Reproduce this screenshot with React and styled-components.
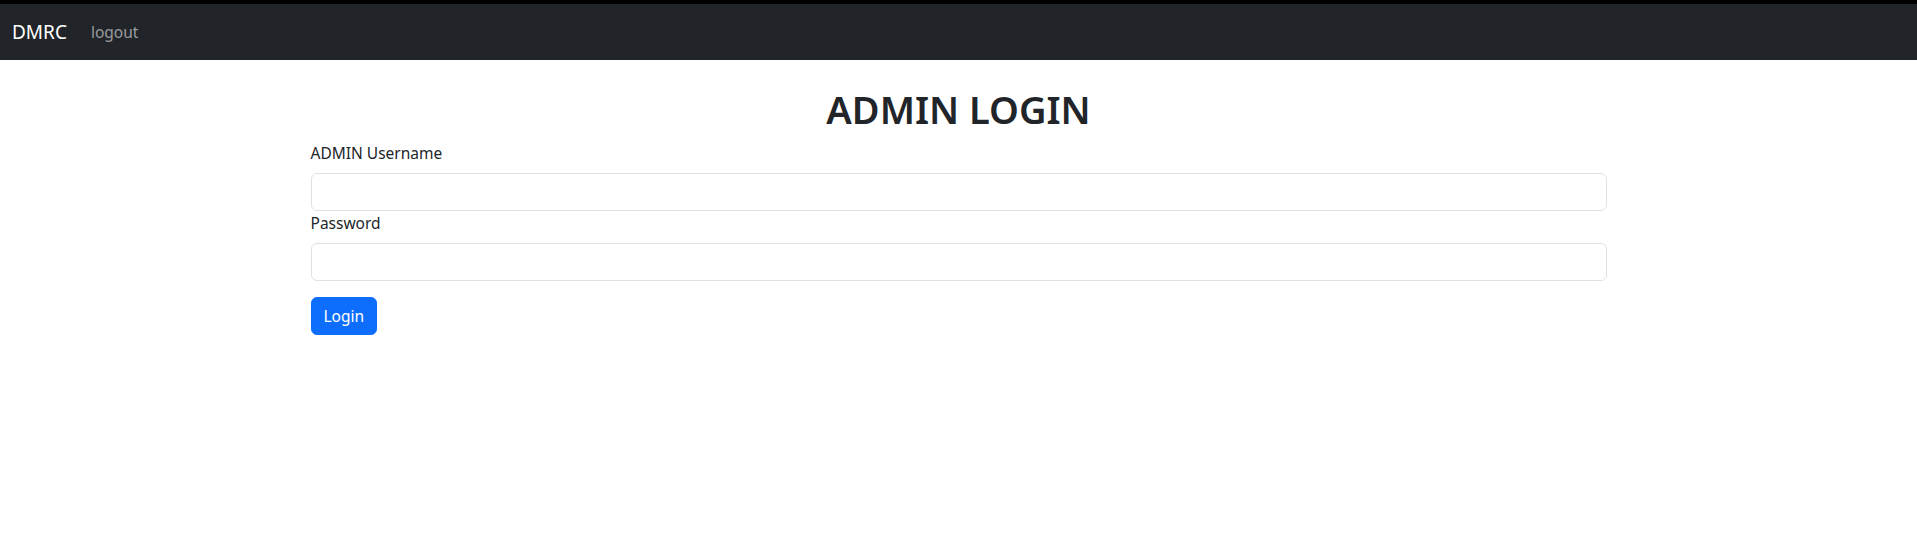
import styled, { createGlobalStyle } from "styled-components";

const GlobalStyle = createGlobalStyle`
    * {
        box-sizing: border-box;
    }
    body {
        margin: 0;
        background: #fff;
        color: #212529;
        font-family: "Segoe UI", "Noto Sans", "Open Sans", sans-serif;
        font-size: 16px;
        line-height: 1.5;
    }
`;

const NavBar = styled.nav`
    display: flex;
    align-items: center;
    padding: 8px 12px;
    background: #212529;
    border-top: 4px solid #000;
`;

const Brand = styled.a`
    padding: 5px 0;
    margin-right: 16px;
    font-size: 19px;
    line-height: 30px;
    color: #fff;
    text-decoration: none;
`;

const NavLink = styled.a`
    padding: 8px;
    font-size: 15.5px;
    line-height: 24px;
    color: rgba(255, 255, 255, 0.55);
    text-decoration: none;
`;

const Container = styled.main`
    width: 100%;
    max-width: 1320px;
    margin: 0 auto;
    padding: 0 12px;
`;

const Title = styled.h1`
    margin: 25px 0 8px;
    text-align: center;
    font-size: 38px;
    font-weight: 600;
    line-height: 48px;
`;

const Label = styled.label`
    display: block;
    margin-bottom: 8px;
    font-size: 15.5px;
    line-height: 24px;
`;

const Input = styled.input`
    display: block;
    width: 100%;
    height: 38px;
    padding: 6px 12px;
    font: inherit;
    border: 1px solid #dee2e6;
    border-radius: 6px;
    outline: none;
`;

const Button = styled.button`
    margin-top: 16px;
    padding: 6px 12px;
    font: inherit;
    font-size: 15.5px;
    line-height: 24px;
    color: #fff;
    background: #0d6efd;
    border: 1px solid #0d6efd;
    border-radius: 6px;
`;

export default function App()
{
    return(
        <>
            <GlobalStyle />
            <NavBar>
                <Brand href="#">DMRC</Brand>
                <NavLink href="#">logout</NavLink>
            </NavBar>
            <Container>
                <Title>ADMIN LOGIN</Title>
                <form onSubmit={e => e.preventDefault()}>
                    <Label htmlFor="username">ADMIN Username</Label>
                    <Input id="username" type="text" />
                    <Label htmlFor="password">Password</Label>
                    <Input id="password" type="password" />
                    <Button type="submit">Login</Button>
                </form>
            </Container>
        </>
    );
}
